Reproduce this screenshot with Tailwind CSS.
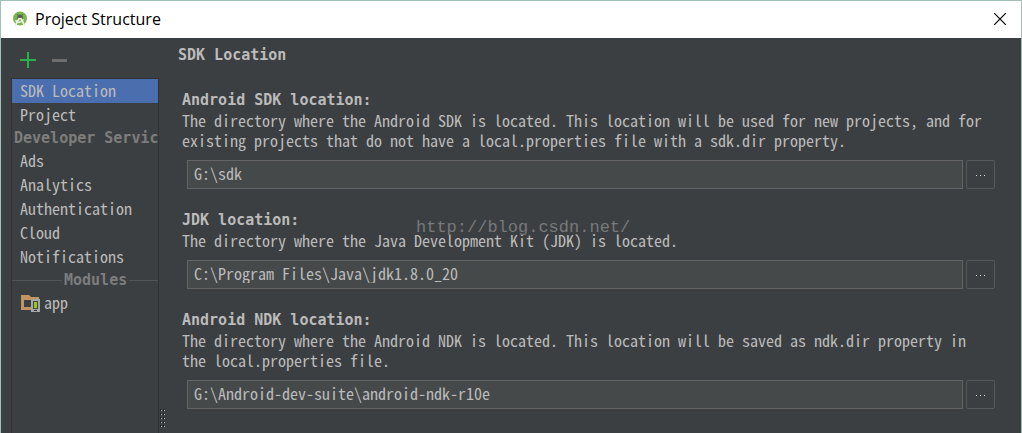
<!DOCTYPE html>
<html lang="en">
<head>
<meta charset="utf-8">
<title>Project Structure</title>
<script src="https://cdn.jsdelivr.net/npm/@tailwindcss/browser@4"></script>
</head>
<body class="relative flex min-h-screen flex-col border border-b-0 border-[#9fc1b8] bg-[#3c3f41] font-['Noto_Sans_Mono_CJK_SC','DejaVu_Sans_Mono',monospace] text-base leading-5 text-[#bbbbbb]">
  <header class="flex h-[37px] items-center bg-white pr-[15px] pb-px pl-[11px] text-black">
    <svg class="h-4 w-4" viewBox="0 0 16 16" aria-hidden="true">
      <circle cx="8" cy="7.5" r="7" fill="#7cb550"/>
      <path d="M5 6.500a3 3 0 0 1 6 0V8H5z" fill="#58704c"/>
      <path d="M5 3l1 1.500M11 3l-1 1.500" stroke="#58704c"/>
      <path d="M8 6L3 15M8 6l5 9" stroke="#eef3ea" stroke-width="1.600" fill="none"/>
      <path d="M3.500 9.500c2 2.500 6 2.500 8-1" stroke="#eef3ea" stroke-width="1.500" fill="none"/>
      <circle cx="8" cy="5.500" r="1.500" fill="#555"/>
    </svg>
    <h1 class="ml-[7px] flex-1 font-['Open_Sans',sans-serif] text-base leading-5">Project Structure</h1>
    <button type="button" aria-label="Close">
      <svg class="h-3 w-3" viewBox="0 0 12 12" fill="none" stroke="#000" stroke-width="1.200"><path d="M0 0l12 12M12 0L0 12"/></svg>
    </button>
  </header>
  <div class="flex flex-1">
    <aside class="flex w-[158px] shrink-0 flex-col pl-2.5">
      <div class="flex h-10 items-center gap-4 pt-1 pl-[9px]">
        <button type="button" aria-label="Add"><svg class="h-4 w-4" viewBox="0 0 16 16" stroke="#2fae4e" stroke-width="2"><path d="M8 0v16M0 8h16"/></svg></button>
        <button type="button" aria-label="Remove"><svg class="h-4 w-4" viewBox="0 0 16 16" stroke="#6e6e6e" stroke-width="3"><path d="M0 8.500h15"/></svg></button>
      </div>
      <nav class="flex-1 overflow-hidden border border-b-0 border-[#303234] leading-[22px] whitespace-nowrap">
        <a href="#" class="block bg-[#4b6eaf] pb-0.5 pl-2">SDK Location</a>
        <a href="#" class="block pb-0.5 pl-2">Project</a>
        <h2 class="pl-0.5 font-['DejaVu_Sans_Mono',monospace] text-[15px] leading-[22px] font-bold text-[#7d7d7d]">Developer Services</h2>
        <a href="#" class="block pb-0.5 pl-2">Ads</a>
        <a href="#" class="block pb-0.5 pl-2">Analytics</a>
        <a href="#" class="block pb-0.5 pl-2">Authentication</a>
        <a href="#" class="block pb-0.5 pl-2">Cloud</a>
        <a href="#" class="block pb-0.5 pl-2">Notifications</a>
        <h2 class="flex items-center gap-0.5 font-['DejaVu_Sans_Mono',monospace] text-[15px] leading-[22px] font-bold text-[#7d7d7d]"><span class="h-px w-[50px] bg-[#515557]"></span>Modules<span class="h-px flex-1 bg-[#515557]"></span></h2>
        <a href="#" class="flex items-center gap-1 pb-0.5 pl-2">
          <svg class="h-5 w-5" viewBox="0 0 20 20" aria-hidden="true">
            <path d="M1 3h8l2 2h8v4h-3V8H4v7h7v3H1z" fill="#c29560"/>
            <path d="M11 7h9v13h-9z" fill="#a3a7a9"/>
            <path d="M13 9h5v8h-5z" fill="#454b2c"/>
            <path d="M14 10h3v6h-3z" fill="#98c51f"/>
            <path d="M14 18.500h3" stroke="#333"/>
          </svg>app</a>
      </nav>
    </aside>
    <div class="flex w-2 flex-col justify-end pb-[5px] pl-px" role="separator" aria-orientation="vertical">
      <svg class="h-5 w-[5px]" viewBox="0 0 5 20" aria-hidden="true">
        <path d="M0 2h1M3 2h1M0 6h1M3 6h1M0 10h1M3 10h1M0 14h1M3 14h1M0 18h1M3 18h1" stroke="#1d1f20" stroke-width="2"/>
        <path d="M1 2.500h1M4 2.500h1M1 6.500h1M4 6.500h1M1 10.500h1M4 10.500h1M1 14.500h1M4 14.500h1M1 18.500h1M4 18.500h1" stroke="#bbb"/>
      </svg>
    </div>
    <main class="flex-1 pt-[7px] pr-[26px] pl-[11px]">
      <h2 class="font-['DejaVu_Sans_Mono',monospace] text-[15px] leading-5 font-bold">SDK Location</h2>
      <div class="mt-[26px] flex flex-col gap-[22px] pl-1">
        <section>
          <label for="sdk" class="block font-['DejaVu_Sans_Mono',monospace] text-[15px] leading-[19px] font-bold">Android SDK location:</label>
          <p>The directory where the Android SDK is located. This location will be used for new projects, and for existing projects that do not have a local.properties file with a sdk.dir property.</p>
          <div class="mt-2.5 flex h-[29px] gap-[3px] pl-[5px]">
            <input id="sdk" value="G:\sdk" class="min-w-0 flex-1 border border-[#646464] bg-[#45494a] px-1.5 pb-[3px]">
            <button type="button" aria-label="Browse SDK" class="flex w-[29px] items-center justify-center gap-[3px] rounded-xs border border-[#55595a] pt-0.5"><i class="h-px w-px bg-[#ddd]"></i><i class="h-px w-px bg-[#ddd]"></i><i class="h-px w-px bg-[#ddd]"></i></button>
          </div>
        </section>
        <section>
          <label for="jdk" class="block font-['DejaVu_Sans_Mono',monospace] text-[15px] leading-[19px] font-bold">JDK location:</label>
          <p>The directory where the Java Development Kit (JDK) is located.</p>
          <div class="mt-2.5 flex h-[29px] gap-[3px] pl-[5px]">
            <input id="jdk" value="C:\Program Files\Java\jdk1.8.0_20" class="min-w-0 flex-1 border border-[#646464] bg-[#45494a] px-1.5 pb-[3px]">
            <button type="button" aria-label="Browse JDK" class="flex w-[29px] items-center justify-center gap-[3px] rounded-xs border border-[#55595a] pt-0.5"><i class="h-px w-px bg-[#ddd]"></i><i class="h-px w-px bg-[#ddd]"></i><i class="h-px w-px bg-[#ddd]"></i></button>
          </div>
        </section>
        <section>
          <label for="ndk" class="block font-['DejaVu_Sans_Mono',monospace] text-[15px] leading-[19px] font-bold">Android NDK location:</label>
          <p>The directory where the Android NDK is located. This location will be saved as ndk.dir property in the local.properties file.</p>
          <div class="mt-2.5 flex h-[29px] gap-[3px] pl-[5px]">
            <input id="ndk" value="G:\Android-dev-suite\android-ndk-r10e" class="min-w-0 flex-1 border border-[#646464] bg-[#45494a] px-1.5 pb-[3px]">
            <button type="button" aria-label="Browse NDK" class="flex w-[29px] items-center justify-center gap-[3px] rounded-xs border border-[#55595a] pt-0.5"><i class="h-px w-px bg-[#ddd]"></i><i class="h-px w-px bg-[#ddd]"></i><i class="h-px w-px bg-[#ddd]"></i></button>
          </div>
        </section>
      </div>
    </main>
  </div>
  <p class="pointer-events-none absolute top-[217px] left-[415px] font-['Liberation_Mono',monospace] text-[17px] text-[#77797a]">http://blog.csdn.net/</p>
</body>
</html>
